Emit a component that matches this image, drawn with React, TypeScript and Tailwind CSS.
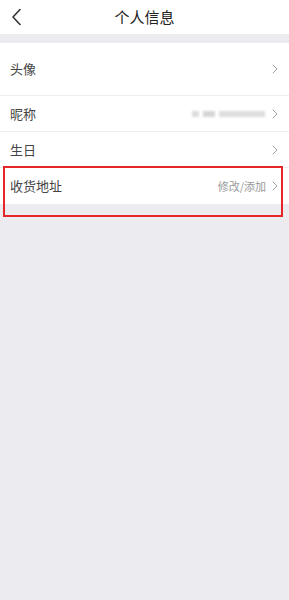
import { ReactNode } from "react";

const Chevron = () => (
    <svg width="6" height="10" viewBox="0 0 6 10" className="shrink-0">
        <path d="M1 1l4 4-4 4" fill="none" stroke="#a0a0a0" strokeWidth="1" strokeLinecap="round" strokeLinejoin="round" />
    </svg>
);

function Row({ label, h, right, last }: { label: string; h: string; right?: ReactNode; last?: boolean }) {
    return (
        <div className={`flex items-center justify-between pl-[10px] pr-[11px] bg-white ${h} ${last ? "" : "border-b border-[#efefef]"}`}>
            <span className="text-[13px] text-[#444]">{label}</span>
            <div className="flex items-center gap-[6px]">
                {right}
                <Chevron />
            </div>
        </div>
    );
}

export default function App() {
    return (
        <div
            className="relative w-[289px] h-[600px] bg-[#ebebf0] overflow-hidden"
            style={{ fontFamily: '"Noto Sans CJK SC", "Noto Sans", sans-serif' }}
        >
            {/* Header */}
            <div className="relative h-[34px] bg-white flex items-center justify-center">
                <svg width="12" height="18" viewBox="0 0 12 18" className="absolute left-[11px] top-[8px]">
                    <path d="M9 1.5L2 9l7 7.5" fill="none" stroke="#333" strokeWidth="1.6" strokeLinecap="round" strokeLinejoin="round" />
                </svg>
                <span className="text-[15px] text-[#222]">个人信息</span>
            </div>

            <div className="mt-[9px]">
                <Row label="头像" h="h-[53px]" />
                <Row
                    label="昵称"
                    h="h-[36px]"
                    right={
                        <div className="flex items-center gap-[4px] blur-[1px] mr-[1px]">
                            <div className="w-[7px] h-[6px] bg-[#dcdcdc]" />
                            <div className="w-[12px] h-[6px] bg-[#d6d6d6]" />
                            <div className="w-[46px] h-[6px] bg-[#dedede]" />
                        </div>
                    }
                />
                <Row label="生日" h="h-[36px]" />
                <Row
                    label="收货地址"
                    h="h-[36px]"
                    last
                    right={<span className="text-[11px] text-[#999]">修改/添加</span>}
                />
            </div>

            {/* annotation */}
            <div className="absolute left-[3px] top-[166px] w-[280px] h-[51px] border-2 border-[#e5262a]" />
        </div>
    );
}
